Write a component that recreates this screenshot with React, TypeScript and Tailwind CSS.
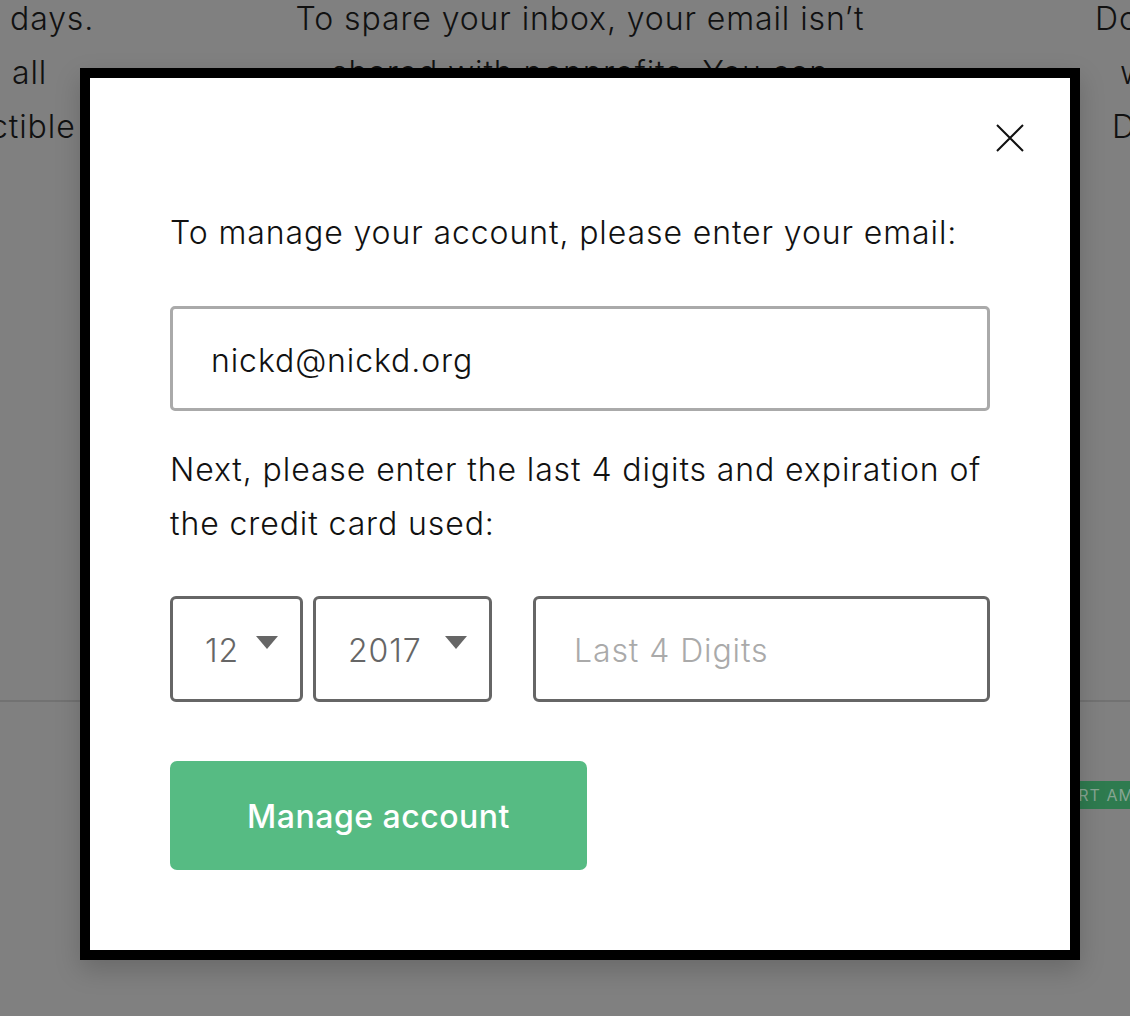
import { useState } from "react";

function CloseIcon() {
  return (
    <svg width="28" height="28" viewBox="0 0 28 28" fill="none">
      <path d="M1 1L27 27M27 1L1 27" stroke="#111" strokeWidth="2" />
    </svg>
  );
}

function Caret() {
  return (
    <svg width="22" height="13" viewBox="0 0 22 13">
      <path d="M0 0H22L11 13Z" fill="#666" />
    </svg>
  );
}

function Select({ value, width }: { value: string; width: string }) {
  return (
    <div
      className={`${width} shrink-0 h-[106px] flex items-center justify-between pl-[32px] pr-[22px] border-[3px] border-[#666] rounded-[6px] text-[32px] text-[#666]`}
    >
      <span className="mt-[3px]">{value}</span>
      <span className="-mt-[14px]">
        <Caret />
      </span>
    </div>
  );
}

export default function App() {
  const [email, setEmail] = useState("nickd@nickd.org");
  const [digits, setDigits] = useState("");

  return (
    <div
      className="relative w-[1130px] h-[1016px] overflow-hidden bg-[#808080] text-[#111] font-light tracking-[0.9px]"
      style={{ fontFamily: "Inter, 'Open Sans', sans-serif" }}
    >
      {/* page behind the overlay */}
      <div className="flex text-[32px] leading-[54px] -mt-[8px] whitespace-nowrap">
        <div className="w-[100px] shrink-0 flex flex-col items-start">
          <span className="ml-[10px]">days.</span>
          <span className="ml-[12px]">all</span>
          <span className="-ml-[10px]">ctible</span>
        </div>
        <div className="w-[960px] shrink-0 flex flex-col items-center">
          <span>To spare your inbox, your email isn’t</span>
          <span>shared with nonprofits. You can</span>
        </div>
        <div className="w-[70px] shrink-0 flex flex-col items-start">
          <span className="ml-[35px]">Do</span>
          <span className="ml-[60px]">w</span>
          <span className="ml-[52px]">D</span>
        </div>
      </div>
      <div className="mt-[546px] h-[2px] bg-[#727272]" />
      <div className="mt-[79px] flex justify-end">
        <div className="w-[180px] shrink-0 h-[28px] bg-[#2e7b4f] text-[#86a592] text-[16px] font-normal tracking-[1px] flex items-center pl-[45px] whitespace-nowrap -mr-[50px]">
          START AMOUNT
        </div>
      </div>

      {/* modal */}
      <div className="absolute inset-0 pt-[68px] pl-[80px]">
        <div className="w-[1000px] h-[892px] bg-white border-[10px] border-black shadow-[0_10px_24px_rgba(0,0,0,0.18)] flex flex-col px-[80px]">
          <div className="flex justify-end -mr-[34px] mt-[46px]">
            <button className="w-[28px] h-[28px]">
              <CloseIcon />
            </button>
          </div>
          <p className="mt-[54px] text-[32px] leading-[54px]">
            To manage your account, please enter your email:
          </p>
          <input
            value={email}
            onChange={(e) => setEmail(e.target.value)}
            className="mt-[46px] h-[105px] w-full border-[3px] border-[#aaa] rounded-[5px] pl-[38px] pt-[3px] text-[32px] text-[#111] outline-none"
          />
          <p className="mt-[32px] text-[32px] leading-[54px]">
            Next, please enter the last 4 digits and expiration of the credit card used:
          </p>
          <div className="mt-[45px] flex">
            <Select value="12" width="w-[133px]" />
            <div className="w-[10px] shrink-0" />
            <Select value="2017" width="w-[179px]" />
            <input
              value={digits}
              onChange={(e) => setDigits(e.target.value)}
              placeholder="Last 4 Digits"
              className="ml-[41px] min-w-0 flex-1 h-[106px] border-[3px] border-[#666] rounded-[6px] pl-[38px] pt-[3px] text-[32px] placeholder:text-[#aaa] outline-none"
            />
          </div>
          <button className="mt-[59px] w-[417px] h-[109px] rounded-[7px] bg-[#56bb83] text-white text-[32px] font-medium tracking-[0.5px] pt-[3px]">
            Manage account
          </button>
        </div>
      </div>
    </div>
  );
}
